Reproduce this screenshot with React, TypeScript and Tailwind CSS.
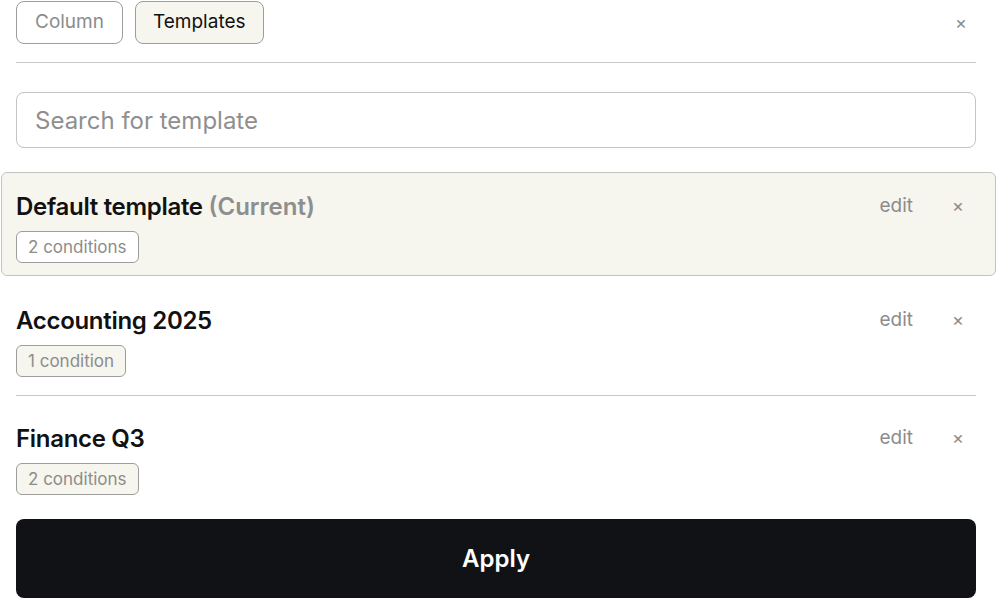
import React from "react";

type Template = {
  id: number;
  name: string;
  conditions: number;
  current?: boolean;
};

const templates: Template[] = [
  { id: 1, name: "Default template", conditions: 2, current: true },
  { id: 2, name: "Accounting 2025", conditions: 1 },
  { id: 3, name: "Finance Q3", conditions: 2 },
];

const RowActions: React.FC = () => (
  <div className="flex items-center text-[19px] leading-[26px] text-[#8c8c8c]">
    <button className="mr-[39px]">edit</button>
    <button className="w-[10px] text-center text-[18px]">×</button>
  </div>
);

const Badge: React.FC<{ count: number; white?: boolean }> = ({ count, white }) => (
  <div
    className={
      "mt-2 inline-flex h-8 items-center rounded-md border border-[#9d9d9d] px-[11px] pt-px text-[17px] text-[#8c8c8c] " +
      (white ? "bg-white" : "bg-[#f6f5ee]")
    }
  >
    {count} {count === 1 ? "condition" : "conditions"}
  </div>
);

const App: React.FC = () => {
  return (
    <div
      className="w-[997px] h-[598px] overflow-hidden bg-white pl-4 pr-[21px] text-[#111111]"
      style={{ fontFamily: "Inter, 'Noto Sans', sans-serif" }}
    >
      <div className="flex items-center justify-between pt-px">
        <div className="flex gap-3">
          <button className="h-[43px] rounded-lg border border-[#9d9d9d] px-[18px] text-[19px] text-[#8c8c8c]">
            Column
          </button>
          <button className="h-[43px] rounded-lg border border-[#9d9d9d] bg-[#f6f5ee] px-[17px] text-[19px] text-[#111111]">
            Templates
          </button>
        </div>
        <button className="mr-[9px] text-[18px] text-[#8c8c8c]">×</button>
      </div>

      <div className="mt-[18px] h-px bg-[#c9c9c9]" />

      <input
        className="mt-[29px] h-[56px] w-full rounded-lg border border-[#c4c4c4] px-[18px] text-[24px] outline-none placeholder:text-[#8f8f8f]"
        placeholder="Search for template"
      />

      <div className="mt-6">
        {templates.map((t, i) => {
          if (t.current) {
            return (
              <div
                key={t.id}
                className="ml-[-15px] mr-[-20px] flex items-start justify-between rounded-md border border-[#c4c4c4] bg-[#f6f5ee] pt-[18px] pb-[12px] pl-[14px] pr-[33px]"
              >
                <div>
                  <div className="text-[24px] font-semibold leading-8 tracking-[-0.3px]">
                    {t.name}{" "}
                    <span className="tracking-normal text-[#8e8e8e]">(Current)</span>
                  </div>
                  <Badge count={t.conditions} white />
                </div>
                <div className="pt-[2px]">
                  <RowActions />
                </div>
              </div>
            );
          }
          const last = i === templates.length - 1;
          return (
            <div
              key={t.id}
              className={
                "flex items-start justify-between pr-[14px] " +
                (i === 1 ? "pt-[29px] " : "pt-[27px] ") +
                (last ? "" : "border-b border-[#c9c9c9] pb-[18px]")
              }
            >
              <div>
                <div className="text-[24px] font-semibold leading-8 tracking-[-0.3px]">{t.name}</div>
                <Badge count={t.conditions} />
              </div>
              <div className="pt-[2px]">
                <RowActions />
              </div>
            </div>
          );
        })}
      </div>

      <button className="mt-6 h-[79px] w-full rounded-lg bg-[#111216] text-[24px] font-semibold text-white">
        Apply
      </button>
    </div>
  );
};

export default App;
